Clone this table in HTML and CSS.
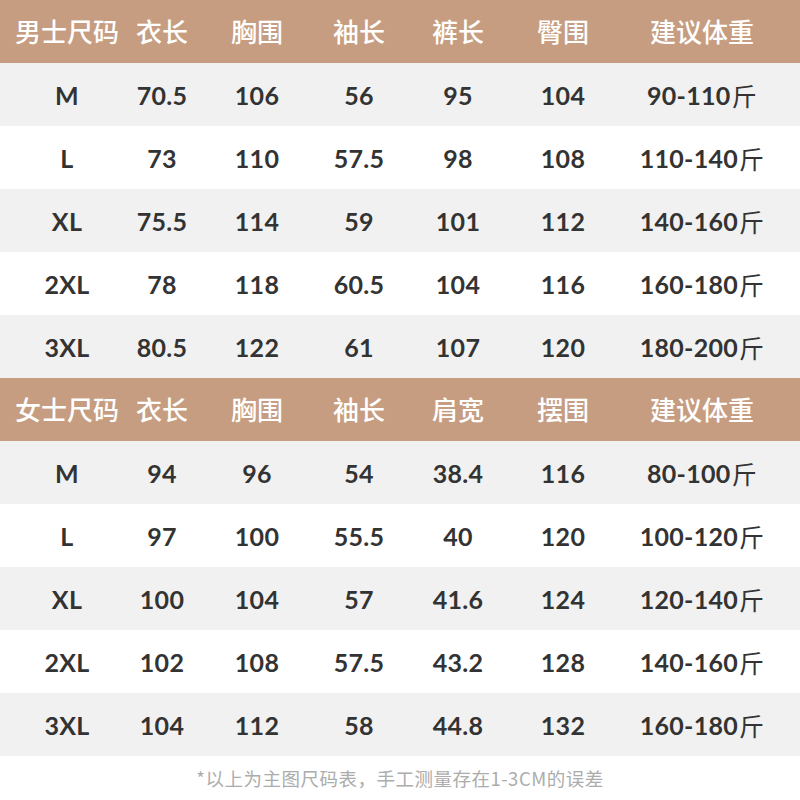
FILE: index.html
```html
<!DOCTYPE html>
<html lang="zh">
<head>
<meta charset="utf-8">
<title>尺码表</title>
<link rel="stylesheet" href="styles.css">
</head>
<body>
<div class="chart">
  <div class="row head">
    <div class="c">男士尺码</div><div class="c">衣长</div><div class="c">胸围</div><div class="c">袖长</div><div class="c">裤长</div><div class="c">臀围</div><div class="c">建议体重</div>
  </div>
  <div class="row grey">
    <div class="c">M</div><div class="c">70.5</div><div class="c">106</div><div class="c">56</div><div class="c">95</div><div class="c">104</div><div class="c">90-110<span class="jin">斤</span></div>
  </div>
  <div class="row">
    <div class="c">L</div><div class="c">73</div><div class="c">110</div><div class="c">57.5</div><div class="c">98</div><div class="c">108</div><div class="c">110-140<span class="jin">斤</span></div>
  </div>
  <div class="row grey">
    <div class="c">XL</div><div class="c">75.5</div><div class="c">114</div><div class="c">59</div><div class="c">101</div><div class="c">112</div><div class="c">140-160<span class="jin">斤</span></div>
  </div>
  <div class="row">
    <div class="c">2XL</div><div class="c">78</div><div class="c">118</div><div class="c">60.5</div><div class="c">104</div><div class="c">116</div><div class="c">160-180<span class="jin">斤</span></div>
  </div>
  <div class="row grey">
    <div class="c">3XL</div><div class="c">80.5</div><div class="c">122</div><div class="c">61</div><div class="c">107</div><div class="c">120</div><div class="c">180-200<span class="jin">斤</span></div>
  </div>
  <div class="row head">
    <div class="c">女士尺码</div><div class="c">衣长</div><div class="c">胸围</div><div class="c">袖长</div><div class="c">肩宽</div><div class="c">摆围</div><div class="c">建议体重</div>
  </div>
  <div class="row grey">
    <div class="c">M</div><div class="c">94</div><div class="c">96</div><div class="c">54</div><div class="c">38.4</div><div class="c">116</div><div class="c">80-100<span class="jin">斤</span></div>
  </div>
  <div class="row">
    <div class="c">L</div><div class="c">97</div><div class="c">100</div><div class="c">55.5</div><div class="c">40</div><div class="c">120</div><div class="c">100-120<span class="jin">斤</span></div>
  </div>
  <div class="row grey">
    <div class="c">XL</div><div class="c">100</div><div class="c">104</div><div class="c">57</div><div class="c">41.6</div><div class="c">124</div><div class="c">120-140<span class="jin">斤</span></div>
  </div>
  <div class="row">
    <div class="c">2XL</div><div class="c">102</div><div class="c">108</div><div class="c">57.5</div><div class="c">43.2</div><div class="c">128</div><div class="c">140-160<span class="jin">斤</span></div>
  </div>
  <div class="row grey">
    <div class="c">3XL</div><div class="c">104</div><div class="c">112</div><div class="c">58</div><div class="c">44.8</div><div class="c">132</div><div class="c">160-180<span class="jin">斤</span></div>
  </div>
  <div class="note">*以上为主图尺码表，手工测量存在1-3CM的误差</div>
</div>
</body>
</html>
```

FILE: styles.css
```css
html, body {
  margin: 0;
  padding: 0;
  background: #ffffff;
}
.chart {
  width: 800px;
  height: 800px;
  display: flex;
  flex-direction: column;
}
.row {
  display: grid;
  grid-template-columns: 134px 56px 134px 70px 128px 82px 196px;
  height: 63px;
  background: #ffffff;
  color: #333333;
  font-family: "Lato", "Noto Sans CJK SC", sans-serif;
  font-weight: 700;
  font-size: 25px;
  letter-spacing: 0.3px;
}
.row.grey {
  background: #f1f1f1;
}
.row.head {
  background: #c69d80;
  color: #ffffff;
  font-family: "Noto Sans CJK SC", sans-serif;
  font-weight: 500;
  font-size: 26px;
  letter-spacing: 0;
}
.c {
  display: flex;
  align-items: center;
  justify-content: center;
  white-space: nowrap;
  min-width: 0;
}
.head .c {
  padding-bottom: 2px;
}
.jin {
  font-family: "Noto Sans CJK SC", sans-serif;
  font-weight: 400;
  font-size: 25px;
  margin-left: 1px;
}
.note {
  flex: 1;
  display: flex;
  align-items: center;
  justify-content: center;
  font-family: "Noto Sans CJK SC", sans-serif;
  font-size: 18.5px;
  letter-spacing: 0.5px;
  color: #acacac;
}
```
